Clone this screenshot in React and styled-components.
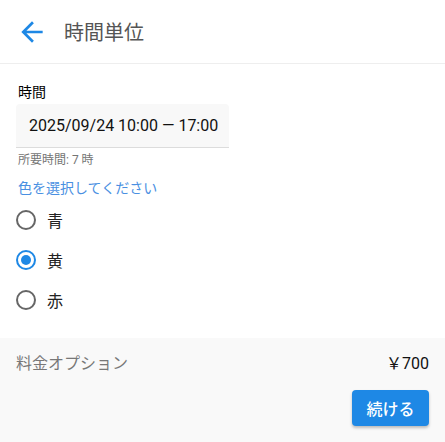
import styled, { createGlobalStyle } from "styled-components";

const GlobalStyle = createGlobalStyle`
  html, body {
    margin: 0;
    padding: 0;
    background: #fff;
    font-family: Roboto, "Noto Sans CJK JP", sans-serif;
  }
`;

const Page = styled.div`
  min-height: 100vh;
  display: flex;
  flex-direction: column;
`;

const Header = styled.header`
  height: 63px;
  display: flex;
  align-items: center;
  gap: 16px;
  padding: 0 16px;
  border-bottom: 1px solid #eeeeee;
`;

const BackButton = styled.button`
  width: 32px;
  height: 32px;
  padding: 0;
  border: none;
  background: none;
  display: flex;
  cursor: pointer;
`;

const Title = styled.h1`
  margin: 0;
  font-size: 20px;
  font-weight: 400;
  color: #555;
`;

const Content = styled.main`
  flex: 1;
  padding: 18px 16px 16px;
`;

const Label = styled.div`
  font-size: 14px;
  line-height: 20px;
  font-weight: 400;
  color: #000;
  padding-left: 2px;
`;

const Field = styled.div`
  width: 213px;
  height: 43px;
  box-sizing: content-box;
  background: #f8f8f8;
  border-radius: 4px 4px 0 0;
  border-bottom: 1px solid #dcdcdc;
  display: flex;
  align-items: center;
  margin-top: 2px;
`;

const FieldText = styled.span`
  font-size: 16px;
  color: #111;
  padding-left: 13px;
`;

const Helper = styled.div`
  font-size: 12px;
  color: #757575;
  padding: 5px 0 0 2px;
  line-height: 14px;
`;

const Prompt = styled.div`
  font-size: 14px;
  color: #4a90e2;
  padding: 13px 0 0 2px;
  line-height: 17px;
`;

const RadioList = styled.div`
  display: flex;
  flex-direction: column;
  margin-top: 3px;
`;

const RadioRow = styled.label`
  height: 40px;
  display: flex;
  align-items: center;
  gap: 11px;
  font-size: 16px;
  color: #222;
  cursor: pointer;
`;

const Circle = styled.span`
  width: 20px;
  height: 20px;
  box-sizing: border-box;
  border-radius: 50%;
  border: 2px solid ${(p) => (p.$checked ? "#1e88e5" : "#666")};
  display: flex;
  align-items: center;
  justify-content: center;

  &::after {
    content: "";
    width: 10px;
    height: 10px;
    border-radius: 50%;
    background: ${(p) => (p.$checked ? "#1e88e5" : "transparent")};
  }
`;

const Footer = styled.footer`
  background: #f9f9f9;
  padding: 14px 16px 16px;
  display: flex;
  flex-direction: column;
  gap: 14px;
`;

const PriceRow = styled.div`
  display: flex;
  justify-content: space-between;
  align-items: center;
  font-size: 16px;
  line-height: 24px;
`;

const PriceLabel = styled.span`
  color: #777;
`;

const Price = styled.span`
  color: #111;
`;

const Actions = styled.div`
  display: flex;
  justify-content: flex-end;
`;

const ContinueButton = styled.button`
  width: 77px;
  height: 36px;
  border: none;
  border-radius: 4px;
  background: #1e88e5;
  color: #fff;
  font-family: inherit;
  font-size: 16px;
  font-weight: 500;
  box-shadow: 0 2px 3px rgba(0, 0, 0, 0.25);
  cursor: pointer;
`;

const colors = [
  { id: "blue", name: "青" },
  { id: "yellow", name: "黄" },
  { id: "red", name: "赤" },
];

const App = () => {
  const selected = "yellow";
  return (
    <>
      <GlobalStyle />
      <Page>
        <Header>
          <BackButton aria-label="戻る">
            <svg width="32" height="32" viewBox="0 0 24 24" fill="#1e88e5">
              <path d="M20 11H7.83l5.59-5.59L12 4l-8 8 8 8 1.41-1.41L7.83 13H20v-2z" />
            </svg>
          </BackButton>
          <Title>時間単位</Title>
        </Header>
        <Content>
          <Label>時間</Label>
          <Field>
            <FieldText>2025/09/24 10:00 — 17:00</FieldText>
          </Field>
          <Helper>所要時間: 7 時</Helper>
          <Prompt>色を選択してください</Prompt>
          <RadioList>
            {colors.map((c) => (
              <RadioRow key={c.id}>
                <Circle $checked={c.id === selected} />
                {c.name}
              </RadioRow>
            ))}
          </RadioList>
        </Content>
        <Footer>
          <PriceRow>
            <PriceLabel>料金オプション</PriceLabel>
            <Price>￥700</Price>
          </PriceRow>
          <Actions>
            <ContinueButton>続ける</ContinueButton>
          </Actions>
        </Footer>
      </Page>
    </>
  );
};

export default App;
